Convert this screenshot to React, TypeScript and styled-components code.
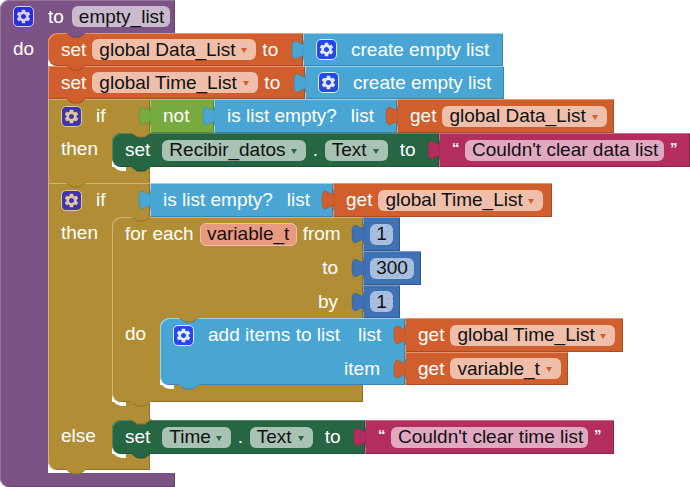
import React from 'react';
import styled, {createGlobalStyle} from "styled-components";
import {MdSettings} from "react-icons/md";

type Tone = {base: string, light: string, dark: string, field: string}

const PROC: Tone = {base: "#7c5385", light: "#94749b", dark: "#664470", field: "#cabacd"}
const VAR: Tone = {base: "#d05f2d", light: "#e5946f", dark: "#a84c24", field: "#efbfab"}
const LIST: Tone = {base: "#49a6d4", light: "#a0d2ea", dark: "#3a85aa", field: "#a4d2e9"}
const CTRL: Tone = {base: "#b18e35", light: "#cdb673", dark: "#8e722a", field: "#d8c69a"}
const LOGIC: Tone = {base: "#77ab41", light: "#a6c97f", dark: "#5f8934", field: "#bbd5a0"}
const COMP: Tone = {base: "#266643", light: "#4f8468", dark: "#1e5236", field: "#a8c2b4"}
const TEXT: Tone = {base: "#b32d5e", light: "#cf6d91", dark: "#8f244b", field: "#e1a8c2"}
const MATH: Tone = {base: "#3f71b5", light: "#7c9dcc", dark: "#325a91", field: "#a9bfe0"}

const GlobalStyle = createGlobalStyle`
    html, body {
        margin: 0;
        background: #fff;
    }

    body {
        overflow: hidden;
        font-family: "Liberation Sans", Arial, sans-serif;
    }
`

const bevel = (t: Tone) => `inset 1px 1px 0 ${t.light}, inset -1px -1px 0 ${t.dark}`
const openBevel = (t: Tone) => `inset 1px 1px 0 ${t.light}, inset -1px 0 0 ${t.dark}`

const Page = styled.div`
    width: 690px;
    height: 487px;
    overflow: hidden;
    font-size: 19px;
    color: #fff;
`

const Row = styled.div`
    display: flex;
    align-items: flex-start;
`

const Stack = styled.div`
    display: flex;
    flex-direction: column;
`

const Block = styled.div<{ $t: Tone, $h?: number, $w?: number, $gap?: number, $round?: boolean, $open?: boolean }>`
    position: relative;
    box-sizing: border-box;
    display: flex;
    align-items: center;
    flex: none;
    white-space: nowrap;
    height: ${p => p.$h ?? 34}px;
    ${p => p.$w ? `width: ${p.$w}px;` : ""}
    padding-left: 13px;
    gap: ${p => p.$gap ?? 6}px;
    background: ${p => p.$t.base};
    box-shadow: ${p => p.$open ? openBevel(p.$t) : bevel(p.$t)};
    border-radius: ${p => p.$round ? "9px 0 0 9px" : "0"};
`

const ProcHead = styled(Block)`
    border-radius: 9px 0 0 0;
`

const NumWrap = styled(Block)`
    padding-left: 7px;
`

// big C-shaped or multi-line blocks: a column of lines
const Panel = styled.div<{ $t: Tone, $w: number, $open?: boolean, $foot?: boolean }>`
    position: relative;
    box-sizing: border-box;
    flex: none;
    width: ${p => p.$w}px;
    background: ${p => p.$t.base};
    box-shadow: ${p => p.$open ? openBevel(p.$t) : bevel(p.$t)};
    border-radius: ${p => p.$foot ? "9px 0 0 9px" : "9px 0 0 0"};
`

const Line = styled.div<{ $h?: number, $end?: boolean, $gap?: number }>`
    box-sizing: border-box;
    display: flex;
    align-items: center;
    white-space: nowrap;
    height: ${p => p.$h ?? 34}px;
    padding: 0 25px 0 13px;
    gap: ${p => p.$gap ?? 6}px;
    justify-content: ${p => p.$end ? "flex-end" : "flex-start"};
`

const ChildSlot = styled.div<{ $corner: Tone, $pb?: number }>`
    position: relative;
    z-index: 1;
    padding-bottom: ${p => p.$pb ?? 0}px;
    background: linear-gradient(${p => p.$corner.base}, ${p => p.$corner.base}) no-repeat 0 0 / 12px 12px;
`

const Spine = styled.div<{ $t: Tone, $w: number }>`
    box-sizing: border-box;
    flex: none;
    align-self: stretch;
    width: ${p => p.$w}px;
    padding-left: 13px;
    line-height: 31px;
    background: ${p => p.$t.base};
    box-shadow: inset 1px 0 0 ${p => p.$t.light};
`

const Bar = styled.div<{ $t: Tone, $w: number, $h: number, $lipAt?: number, $bottom?: boolean }>`
    position: relative;
    box-sizing: border-box;
    width: ${p => p.$w}px;
    height: ${p => p.$h}px;
    background: ${p => p.$t.base};
    box-shadow: ${p => p.$bottom
            ? `inset 1px 0 0 ${p.$t.light}, inset -1px -1px 0 ${p.$t.dark}`
            : `inset 1px 0 0 ${p.$t.light}, inset -1px 0 0 ${p.$t.dark}`};
    border-bottom-left-radius: ${p => p.$bottom ? 9 : 0}px;

    &::before {
        content: "";
        display: ${p => p.$lipAt ? "block" : "none"};
        position: absolute;
        left: ${p => p.$lipAt}px;
        top: -10px;
        width: 14px;
        height: 14px;
        background: #fff;
        border-bottom-left-radius: 10px;
    }
`

const Field = styled.span<{ $t: Tone, $w: number }>`
    box-sizing: border-box;
    display: flex;
    align-items: center;
    justify-content: space-between;
    flex: none;
    width: ${p => p.$w}px;
    height: 21px;
    padding: 0 9px 0 7px;
    border-radius: 6px;
    background: ${p => p.$t.field};
    color: #111;
`

const NameField = styled(Field)`
    margin-left: -6px;
`

const VarName = styled(Field)`
    height: 23px;
    background: #e89a80;
    border: 1px solid #f0bfa9;
    justify-content: center;
    padding: 0;
`

const NumField = styled(Field)`
    justify-content: center;
    padding: 0;
    background-image: radial-gradient(rgba(60, 90, 140, .3) .6px, transparent .8px);
    background-size: 5px 5px;
`

const ListLabel = styled.span`
    margin-left: 4px;
`

const Arrow = styled.i<{ $c: string }>`
    width: 0;
    height: 0;
    margin-top: 2px;
    border-left: 3.5px solid transparent;
    border-right: 3.5px solid transparent;
    border-top: 5px solid ${p => p.$c};
`

const Dot = styled.span`
    margin: 0 -5.5px;
`

const Quote = styled.span`
    font-size: 15px;
    font-weight: bold;
    margin-top: -6px;
    width: 7px;
    text-align: center;
`

const GearBox = styled.span<{ $bg: string, $fg: string }>`
    box-sizing: border-box;
    display: flex;
    align-items: center;
    justify-content: center;
    flex: none;
    width: 21px;
    height: 21px;
    border-radius: 5px;
    border: 1px solid ${p => p.$fg};
    background: ${p => p.$bg};
    color: ${p => p.$fg};
`

const TabSvg = styled.svg`
    position: absolute;
    left: -11px;
    top: 7px;
    width: 12px;
    height: 20px;
    overflow: visible;
`

const BumpSvg = styled.svg<{ $at: number }>`
    position: absolute;
    z-index: 3;
    left: ${p => p.$at}px;
    top: calc(100% - 1px);
    width: 22px;
    height: 6px;
    overflow: visible;
`

function Tab({t}: { t: Tone }) {
    return (
        <TabSvg viewBox="-8 0 8 15" preserveAspectRatio="none">
            <path d="M0,0 c0,10 -8,-8 -8,7.5 s8,-2.5 8,7.5 z" fill={t.base} stroke={t.dark} strokeWidth="0.4"/>
            <path d="M0.6,-0.5 V15.5" stroke={t.base} strokeWidth="1.4"/>
        </TabSvg>
    )
}

function Bump({t, at}: { t: Tone, at: number }) {
    return (
        <BumpSvg $at={at} viewBox="0 0 22 6">
            <path d="M0 0 L6 4.5 Q7 5.5 8 5.5 L14 5.5 Q15 5.5 16 4.5 L22 0 Z" fill={t.dark}/>
            <path d="M0 0 L6 3.5 Q7 4.5 8 4.5 L14 4.5 Q15 4.5 16 3.5 L22 0 Z" fill={t.base}/>
        </BumpSvg>
    )
}

function Gear({bg, fg}: { bg: string, fg: string }) {
    return <GearBox $bg={bg} $fg={fg}><MdSettings size={17}/></GearBox>
}

function Drop({t, w, children}: { t: Tone, w: number, children: React.ReactNode }) {
    return <Field $t={t} $w={w}>{children}<Arrow $c={t.base}/></Field>
}

function GetVar({w, fw, name, h = 34}: { w: number, fw: number, name: string, h?: number }) {
    return (
        <Block $t={VAR} $w={w} $h={h}>
            <Tab t={VAR}/>
            get
            <Drop t={VAR} w={fw}>{name}</Drop>
        </Block>
    )
}

function SetVar({name, w, fw, round}: { name: string, w: number, fw: number, round?: boolean }) {
    return (
        <Block $t={VAR} $w={w} $h={33} $round={round}>
            set
            <Drop t={VAR} w={fw}>{name}</Drop>
            to
            <Bump t={VAR} at={17}/>
        </Block>
    )
}

function CreateList({w}: { w: number }) {
    return (
        <Block $t={LIST} $w={w} $h={33} $gap={14}>
            <Tab t={LIST}/>
            <Gear bg="#2548ec" fg="#e4ecfa"/>
            create empty list
        </Block>
    )
}

function NumBlock({w, fw, v, h = 34}: { w: number, fw: number, v: string, h?: number }) {
    return (
        <NumWrap $t={MATH} $w={w} $h={h}>
            <Tab t={MATH}/>
            <NumField $t={MATH} $w={fw}>{v}</NumField>
        </NumWrap>
    )
}

function SetProp({w, target, tw}: { w: number, target: string, tw: number }) {
    return (
        <Block $t={COMP} $w={w} $round $gap={12}>
            set
            <Drop t={COMP} w={tw}>{target}</Drop>
            <Dot>.</Dot>
            <Drop t={COMP} w={63}>Text</Drop>
            to
            <Bump t={COMP} at={18}/>
        </Block>
    )
}

function TextBlock({w, fw, v}: { w: number, fw: number, v: string }) {
    return (
        <Block $t={TEXT} $w={w}>
            <Tab t={TEXT}/>
            <Quote>“</Quote>
            <Field $t={TEXT} $w={fw}>{v}</Field>
            <Quote>”</Quote>
        </Block>
    )
}

function IfHead() {
    return (
        <Block $t={CTRL} $w={102} $gap={14} $open>
            <Gear bg="#4234b0" fg="#ddc89a"/>
            if
            <Bump t={CTRL} at={82}/>
        </Block>
    )
}

function ForEach() {
    return (
        <Stack>
            <Row>
                <Panel $t={CTRL} $w={251} $open>
                    <Line>
                        for each
                        <VarName $t={VAR} $w={97}>variable_t</VarName>
                        from
                    </Line>
                    <Line $end>to</Line>
                    <Line $end $h={33}>by</Line>
                    <Bump t={CTRL} at={66}/>
                </Panel>
                <Stack>
                    <NumBlock w={37} fw={23} v="1"/>
                    <NumBlock w={58} fw={44} v="300"/>
                    <NumBlock w={37} fw={23} v="1" h={33}/>
                </Stack>
            </Row>
            <Row>
                <Spine $t={CTRL} $w={48}>do</Spine>
                <ChildSlot $corner={CTRL}>
                    <Row>
                        <Panel $t={LIST} $w={245} $foot>
                            <Line $gap={14}>
                                <Gear bg="#2548ec" fg="#e4ecfa"/>
                                add items to list
                                <ListLabel>list</ListLabel>
                            </Line>
                            <Line $end $h={33}>item</Line>
                            <Bump t={LIST} at={18}/>
                        </Panel>
                        <Stack>
                            <GetVar w={218} fw={165} name="global Time_List"/>
                            <GetVar w={163} fw={111} name="variable_t" h={33}/>
                        </Stack>
                    </Row>
                </ChildSlot>
            </Row>
            <Bar $t={CTRL} $w={251} $h={17} $lipAt={48} $bottom>
                <Bump t={CTRL} at={18}/>
            </Bar>
        </Stack>
    )
}

function App() {
    return (
        <Page>
            <GlobalStyle/>
            <ProcHead $t={PROC} $w={175} $h={33} $gap={14} $open>
                <Gear bg="#2a2ce0" fg="#d8d0f0"/>
                to
                <NameField $t={PROC} $w={98}>empty_list</NameField>
                <Bump t={PROC} at={65}/>
            </ProcHead>
            <Row>
                <Spine $t={PROC} $w={48}>do</Spine>
                <ChildSlot $corner={PROC} $pb={3}>
                    <Row>
                        <SetVar name="global Data_List" w={255} fw={164} round/>
                        <CreateList w={200}/>
                    </Row>
                    <Row>
                        <SetVar name="global Time_List" w={257} fw={166}/>
                        <CreateList w={199}/>
                    </Row>

                    <Row>
                        <IfHead/>
                        <Block $t={LOGIC} $w={64}>
                            <Tab t={LOGIC}/>
                            not
                        </Block>
                        <Block $t={LIST} $w={183} $gap={14}>
                            <Tab t={LIST}/>
                            is list empty?
                            <span>list</span>
                        </Block>
                        <GetVar w={217} fw={165} name="global Data_List"/>
                    </Row>
                    <Row>
                        <Spine $t={CTRL} $w={64}>then</Spine>
                        <ChildSlot $corner={CTRL}>
                            <Row>
                                <SetProp w={327} target="Recibir_datos" tw={144}/>
                                <TextBlock w={251} fw={199} v="Couldn't clear data list"/>
                            </Row>
                        </ChildSlot>
                    </Row>
                    <Bar $t={CTRL} $w={102} $h={16} $lipAt={64}>
                        <Bump t={CTRL} at={17}/>
                    </Bar>

                    <Row>
                        <IfHead/>
                        <Block $t={LIST} $w={183} $gap={14}>
                            <Tab t={LIST}/>
                            is list empty?
                            <span>list</span>
                        </Block>
                        <GetVar w={219} fw={165} name="global Time_List"/>
                    </Row>
                    <Row>
                        <Spine $t={CTRL} $w={64}>then</Spine>
                        <ChildSlot $corner={CTRL}>
                            <ForEach/>
                        </ChildSlot>
                    </Row>
                    <Bar $t={CTRL} $w={102} $h={18} $lipAt={64}>
                        <Bump t={CTRL} at={82}/>
                    </Bar>
                    <Row>
                        <Spine $t={CTRL} $w={64}>else</Spine>
                        <ChildSlot $corner={CTRL}>
                            <Row>
                                <SetProp w={253} target="Time" tw={69}/>
                                <TextBlock w={249} fw={197} v="Couldn't clear time list"/>
                            </Row>
                        </ChildSlot>
                    </Row>
                    <Bar $t={CTRL} $w={102} $h={16} $lipAt={64} $bottom>
                        <Bump t={CTRL} at={17}/>
                    </Bar>
                </ChildSlot>
            </Row>
            <Bar $t={PROC} $w={175} $h={14} $bottom/>
        </Page>
    );
}

export default App;
